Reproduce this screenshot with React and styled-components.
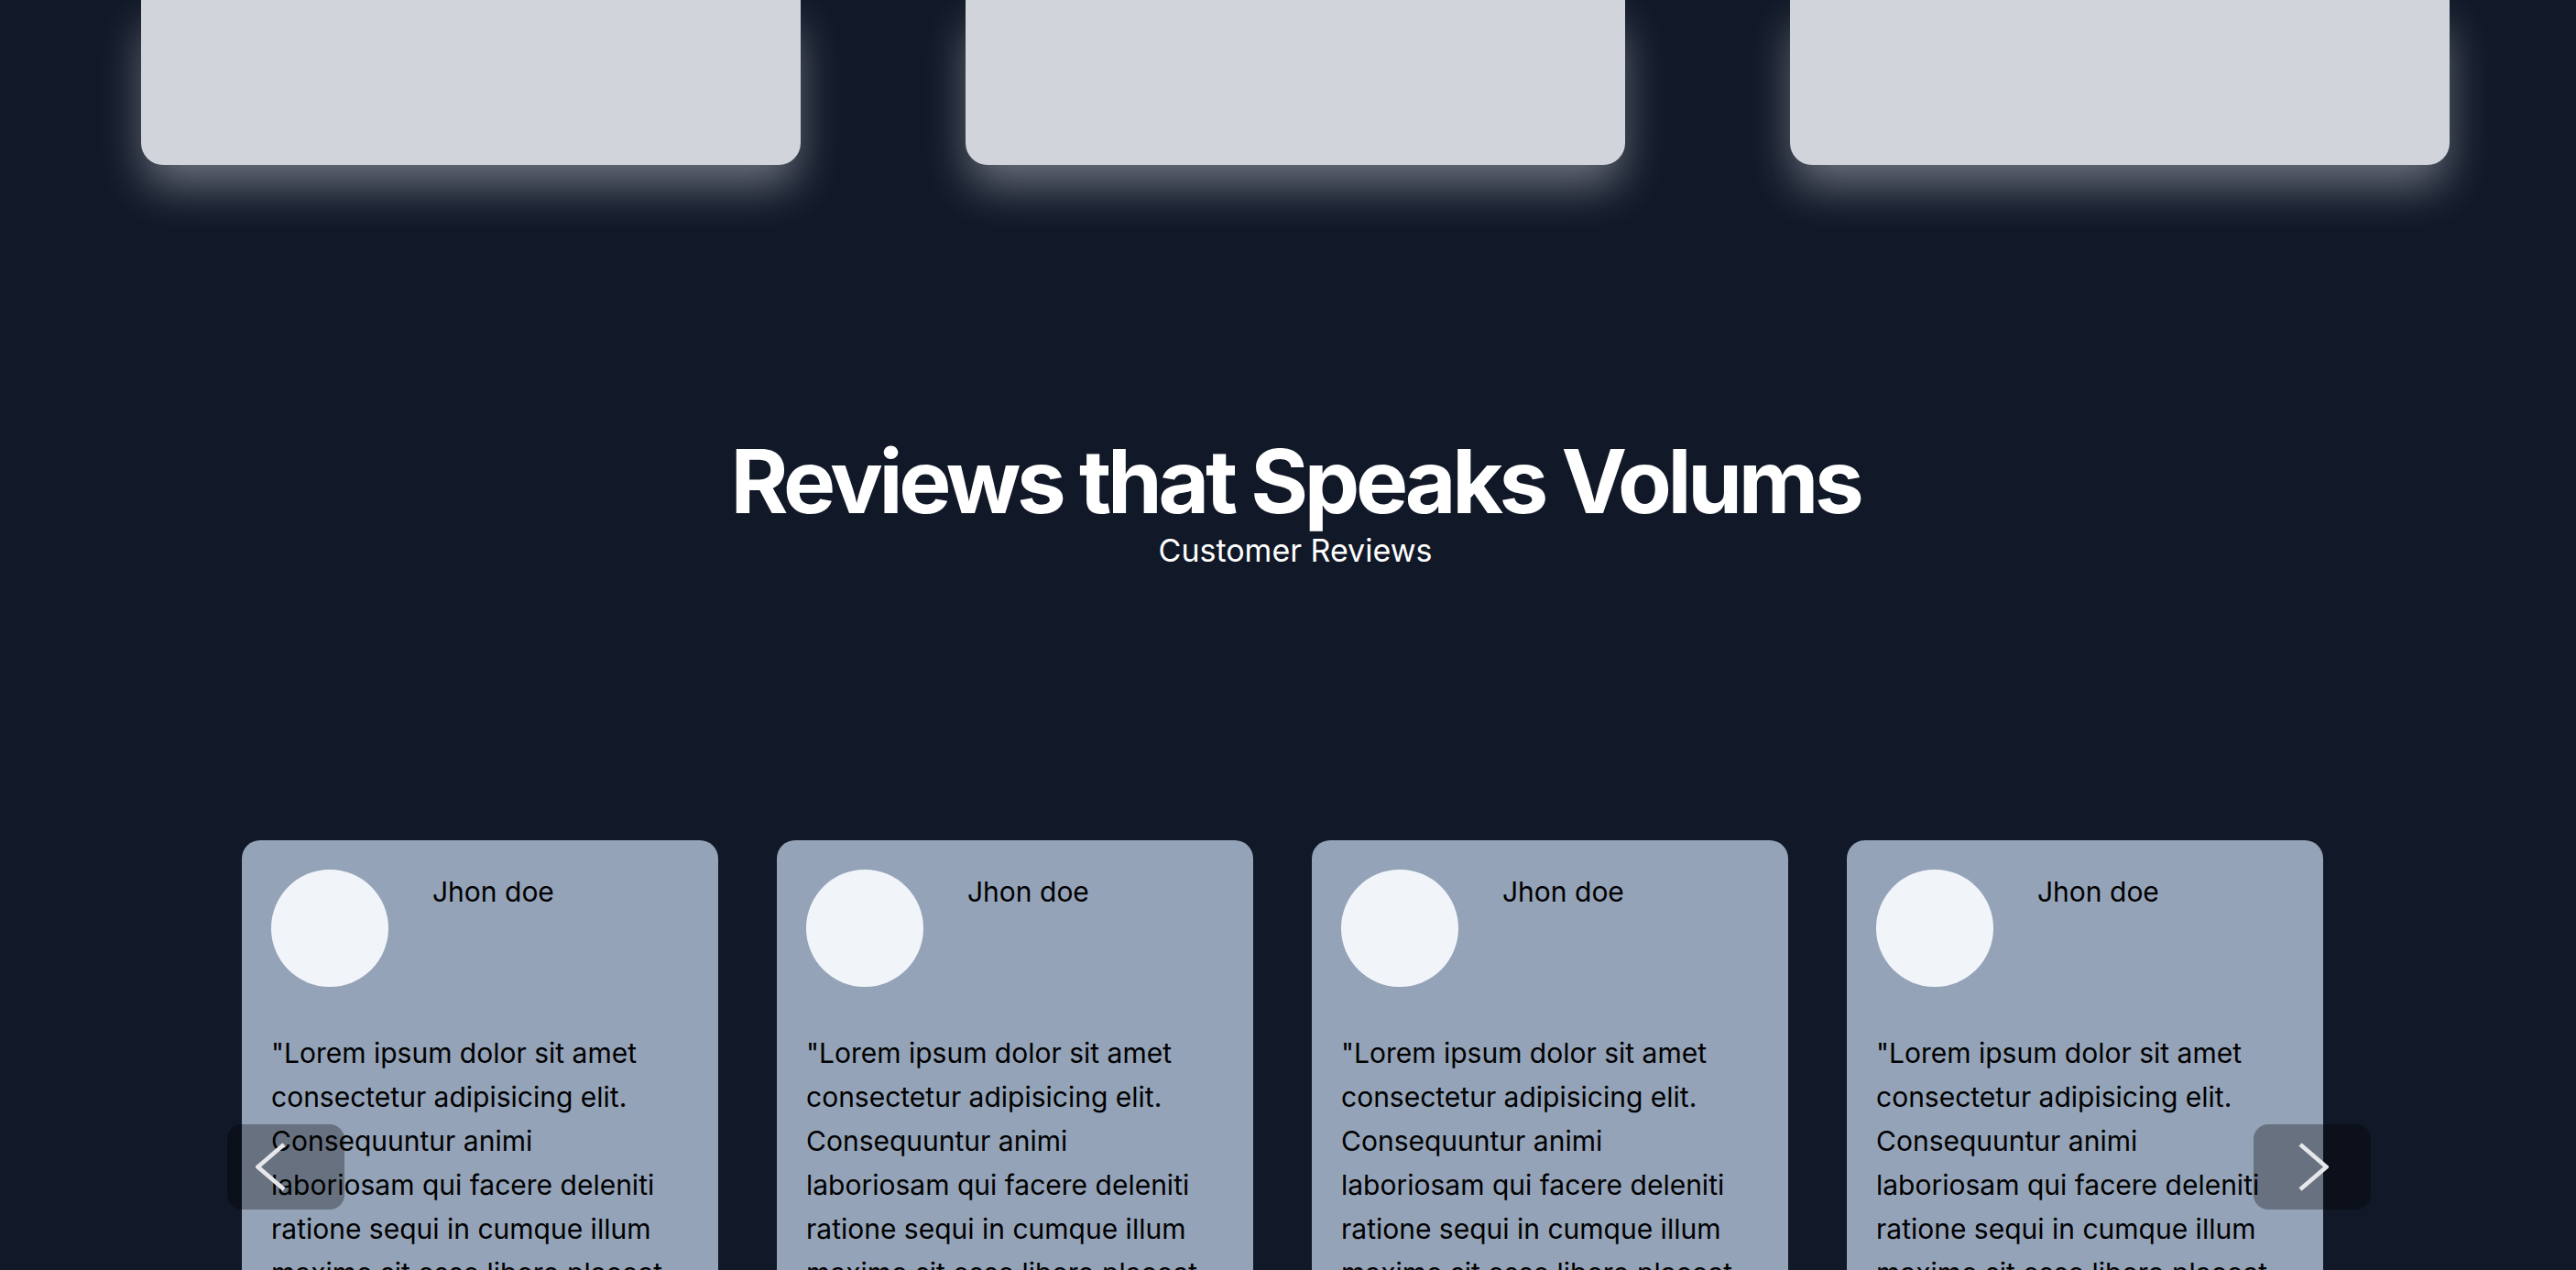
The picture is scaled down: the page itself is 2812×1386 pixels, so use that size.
import React from 'react';
import styled, { createGlobalStyle } from 'styled-components';

const GlobalStyle = createGlobalStyle`
  html, body {
    margin: 0;
    padding: 0;
    background-color: #111827;
    overflow: hidden;
  }
  body {
    font-family: Inter, "Noto Sans", "Liberation Sans", sans-serif;
  }
  * {
    box-sizing: border-box;
  }
`;

// Page wrapper (content sits 8px in, like the body margin of the original)
const Page = styled.div`
  width: 100vw;
  margin-left: 8px;
  min-height: 100vh;
  background-color: #111827;
`;

// Feature cards at the top, scrolled partly out of view
const FeatureRow = styled.section`
  display: grid;
  grid-template-columns: repeat(3, 720px);
  justify-content: center;
  column-gap: 180px;
`;

const FeatureCard = styled.div`
  height: 180px;
  background-color: #d1d5db;
  border-radius: 0 0 24px 24px;
  box-shadow: 0 26px 50px -4px rgba(209, 213, 219, 0.48);
`;

const Heading = styled.header`
  display: flex;
  flex-direction: column;
  align-items: center;
  padding-top: 297px;
  color: #ffffff;
`;

const Title = styled.h2`
  margin: 0;
  font-size: 96px;
  line-height: 96px;
  font-weight: 700;
  letter-spacing: -4.3px;
`;

const Subtitle = styled.p`
  margin: 8px 0 0;
  font-size: 34px;
  line-height: 40px;
  font-weight: 400;
`;

const Carousel = styled.section`
  position: relative;
  width: 2340px;
  margin: 296px 0 0 240px;
`;

const Track = styled.div`
  display: flex;
  gap: 64px;
  padding: 0 16px;
  overflow: hidden;
`;

const ReviewCard = styled.article`
  flex: 0 0 520px;
  padding: 32px;
  background-color: #94a3b8;
  border-radius: 20px;
  color: #000000;
`;

const ReviewHeader = styled.div`
  display: flex;
  align-items: flex-start;
  gap: 48px;
`;

const Avatar = styled.div`
  width: 128px;
  height: 128px;
  flex-shrink: 0;
  border-radius: 50%;
  background-color: #f1f5f9;
`;

const Name = styled.h3`
  margin: 0;
  padding-top: 6px;
  font-size: 30px;
  line-height: 36px;
  font-weight: 400;
`;

const Quote = styled.p`
  max-width: 448px;
  margin: 48px 0 0;
  font-size: 30px;
  line-height: 48px;
`;

const NavButton = styled.button`
  position: absolute;
  top: 310px;
  ${(p) => (p.side === 'left' ? 'left: 0;' : 'right: 0;')}
  width: 128px;
  height: 93px;
  display: flex;
  align-items: center;
  justify-content: center;
  padding: ${(p) => (p.side === 'left' ? '0 33px 0 0' : '0 0 0 2px')};
  border: none;
  border-radius: 16px;
  background-color: rgba(0, 0, 0, 0.3);
  cursor: pointer;
`;

const Chevron = ({ dir }) => (
  <svg width="34" height="56" viewBox="0 0 34 56" fill="none">
    <polyline
      points={dir === 'left' ? '31,3 2.5,27.5 31,52' : '3,3 31.5,27.5 3,52'}
      stroke="#e5e7eb"
      strokeWidth="4.6"
      strokeLinejoin="miter"
    />
  </svg>
);

const quote =
  '"Lorem ipsum dolor sit amet consectetur adipisicing elit. Consequuntur animi laboriosam qui facere deleniti ratione sequi in cumque illum maxime sit esse libero placeat, quod nobis! Quas, perspiciatis."';

const reviews = [1, 2, 3, 4, 5].map((id) => ({ id, name: 'Jhon doe', text: quote }));

const App = () => {
  return (
    <>
      <GlobalStyle />
      <Page>
        <FeatureRow>
          <FeatureCard />
          <FeatureCard />
          <FeatureCard />
        </FeatureRow>

        <Heading>
          <Title>Reviews that Speaks Volums</Title>
          <Subtitle>Customer Reviews</Subtitle>
        </Heading>

        <Carousel>
          <Track>
            {reviews.map((r) => (
              <ReviewCard key={r.id}>
                <ReviewHeader>
                  <Avatar />
                  <Name>{r.name}</Name>
                </ReviewHeader>
                <Quote>{r.text}</Quote>
              </ReviewCard>
            ))}
          </Track>
          <NavButton side="left" aria-label="Previous">
            <Chevron dir="left" />
          </NavButton>
          <NavButton side="right" aria-label="Next">
            <Chevron dir="right" />
          </NavButton>
        </Carousel>
      </Page>
    </>
  );
};

export default App;
